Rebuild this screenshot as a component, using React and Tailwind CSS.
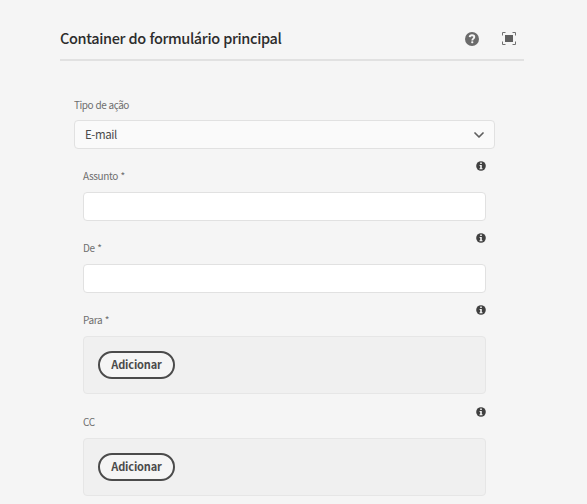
function HelpIcon() {
  return (
    <svg width="14" height="14" viewBox="0 0 14 14" aria-hidden="true">
      <circle cx="7" cy="7" r="7" fill="#6b6b6b" />
      <path d="M4.700 5.100C4.800 3.900 5.700 3.200 7 3.200c1.400 0 2.300.7 2.300 1.900 0 1.500-2 1.600-2 3.300" fill="none" stroke="#f5f5f5" strokeWidth="1.900" />
      <rect x="6.200" y="9.300" width="2.100" height="2" rx=".8" fill="#f5f5f5" />
    </svg>
  );
}

function FullScreenIcon() {
  return (
    <svg width="14" height="13" viewBox="0 0 14 13" aria-hidden="true">
      <rect x="3" y="3" width="8" height="7" fill="#5f5f5f" />
      <path d="M.5 3.5v-3h3M10.500 .5h3v3M13.500 9.500v3h-3M3.500 12.500h-3v-3" fill="none" stroke="#707070" />
    </svg>
  );
}

function InfoIcon() {
  return (
    <svg width="10" height="10" viewBox="0 0 10 10" className="mt-[12px]" aria-hidden="true">
      <circle cx="5" cy="5" r="4.800" fill="#404040" />
      <path d="M4.200 1.500h1.600v1.500H4.200zM3.600 4h2.200v3.200h.7v1H3.500v-1h.7V5h-.6z" fill="#f5f5f5" />
    </svg>
  );
}

function Field({ label, children }) {
  return (
    <div>
      <div className="flex h-[43px] items-start justify-between">
        <span className="mt-[20px] text-[10px] leading-[14px] tracking-[-0.36px] text-[#6e6e6e] [word-spacing:0.6px]">{label}</span>
        <InfoIcon />
      </div>
      {children}
    </div>
  );
}

function TextField({ label }) {
  return <input aria-label={label} className="block h-[29px] w-full rounded-[4px] border border-[#e1e1e1] bg-white px-3 outline-none" />;
}

function AddBox() {
  return (
    <div className="h-[58px] rounded-[4px] border border-[#e6e6e6] bg-[#f0f0f0] pl-[14px] pt-[14px]">
      <button className="flex h-[28px] w-[77px] items-center justify-center rounded-full border-2 border-[#4b4b4b] bg-[#f5f5f5] pb-[2px] text-[11px] font-bold leading-[16px] tracking-[-0.15px] text-[#4b4b4b]">
        Adicionar
      </button>
    </div>
  );
}

export default function App() {
  return (
    <main className="h-[504px] w-[587px] overflow-hidden bg-[#f5f5f5] pl-[60px] font-['Noto_Sans_CJK_SC','Noto_Sans',sans-serif]">
      <header className="flex h-[61px] w-[464px] items-center border-b-2 border-[#e1e1e1] pt-[18px]">
        <h1 className="flex-1 whitespace-nowrap pb-[1px] text-[14.5px] font-medium leading-[20px] tracking-[-0.37px] text-[#2c2c2c] [word-spacing:0.6px]">Container do formulário principal</h1>
        <HelpIcon />
        <div className="ml-[23px] mr-[8px]"><FullScreenIcon /></div>
      </header>
      <form className="ml-[14px] w-[421px] pt-[37px]">
        <div className="text-[10px] leading-[14px] tracking-[-0.5px] text-[#6e6e6e] [word-spacing:0.7px]">Tipo de ação</div>
        <div className="mt-[8px] flex h-[29px] items-center justify-between rounded-[4px] border border-[#e1e1e1] bg-[#fafafa] pl-[10px] pr-[10px] text-[11.5px] leading-[16px] tracking-[-0.4px] text-[#4b4b4b]">
          <span className="pb-[1px]">E-mail</span>
          <svg width="10" height="6" viewBox="0 0 10 6" aria-hidden="true">
            <path d="M1 1l4 4 4-4" fill="none" stroke="#5f5f5f" strokeWidth="1.700" strokeLinecap="round" strokeLinejoin="round" />
          </svg>
        </div>
        <div className="ml-[9px] w-[403px]">
          <Field label="Assunto *"><TextField label="Assunto" /></Field>
          <Field label="De *"><TextField label="De" /></Field>
          <Field label="Para *"><AddBox /></Field>
          <div className="pt-[1px]">
            <Field label="CC"><AddBox /></Field>
          </div>
        </div>
      </form>
    </main>
  );
}
